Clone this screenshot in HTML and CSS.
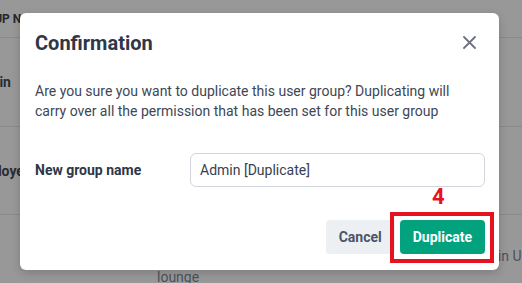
FILE: index.html
```html
<!DOCTYPE html>
<html>
<head>
<meta charset="utf-8">
<link rel="stylesheet" href="styles.css">
</head>
<body>
<div class="page">
  <div class="table">
    <div class="row head">
      <span class="c1">Group Name</span>
      <span class="c2">Description</span>
    </div>
    <div class="row r1"><span class="c1 strong">Admin</span></div>
    <div class="row r2"><span class="c1 strong">Employee</span></div>
    <div class="row r3">
      <span class="c1"></span>
      <span class="c2">Access to the staff<br>lounge</span>
      <span class="c3">Main Users</span>
    </div>
  </div>

  <div class="modal">
    <div class="modal-head">
      <h2 class="title">Confirmation</h2>
      <svg class="close" width="13" height="13" viewBox="0 0 13 13" aria-hidden="true">
        <path d="M1 1 L12 12 M12 1 L1 12" stroke="#6b7280" stroke-width="1.8" stroke-linecap="round" fill="none"/>
      </svg>
    </div>
    <p class="message">Are you sure you want to duplicate this user group? Duplicating will carry over all the permission that has been set for this user group</p>
    <div class="field">
      <label class="label">New group name</label>
      <div class="input">Admin [Duplicate]</div>
    </div>
    <div class="actions">
      <button class="btn cancel">Cancel</button>
      <button class="btn primary">Duplicate</button>
    </div>
    <div class="mark-num">4</div>
    <div class="mark-box"></div>
  </div>
</div>
</body>
</html>
```

FILE: styles.css
```css
* { box-sizing: border-box; }
html, body { margin: 0; padding: 0; }
body {
  font-family: Roboto, "Liberation Sans", sans-serif;
  background: #989898;
  width: 522px;
  height: 283px;
  overflow: hidden;
}
.page {
  position: relative;
  width: 522px;
  height: 283px;
  overflow: hidden;
}
.table {
  margin-left: -30px;
  width: 600px;
}
.row {
  display: flex;
  align-items: center;
  border-bottom: 1px solid #8a8a8a;
  color: #2a2c30;
  font-size: 14px;
}
.head {
  height: 38px;
  font-size: 12px;
  font-weight: 700;
  text-transform: uppercase;
  color: #25272b;
}
.r1 { height: 89px; }
.r2 { height: 88px; }
.r3 {
  align-items: flex-start;
  border-bottom: none;
  padding-top: 31px;
  line-height: 21px;
  color: #4d5158;
}
.c1 { width: 187px; flex: none; }
.c2 { width: 321px; flex: none; }
.c3 { flex: none; white-space: nowrap; }
.strong { font-weight: 700; color: #2a2c30; }

.modal {
  position: absolute;
  left: 20px;
  top: 13px;
  width: 479px;
  height: 257px;
  background: #ffffff;
  border-radius: 6px;
  box-shadow: 0 3px 10px rgba(0, 0, 0, 0.18);
  padding: 16px 14px 16px 15px;
}
.modal-head {
  display: flex;
  justify-content: space-between;
  align-items: center;
  height: 28px;
}
.title {
  margin: 0;
  font-size: 20px;
  line-height: 28px;
  font-weight: 700;
  color: #2d3748;
}
.close { margin-right: 9px; margin-top: -2px; }
.message {
  margin: 24px 0 0;
  max-width: 436px;
  font-size: 14px;
  line-height: 20px;
  color: #3d4756;
}
.field {
  display: flex;
  align-items: center;
  margin-top: 32px;
}
.label {
  width: 155px;
  flex: none;
  font-size: 14px;
  font-weight: 700;
  color: #2d3748;
}
.input {
  width: 295px;
  height: 34px;
  border: 1px solid #d3d6dc;
  border-radius: 6px;
  padding: 0 9px;
  display: flex;
  align-items: center;
  font-size: 14px;
  color: #374151;
}
.actions {
  display: flex;
  justify-content: flex-end;
  gap: 5px;
  margin-top: 33px;
}
.btn {
  height: 34px;
  border: none;
  border-radius: 4px;
  padding: 0 13px;
  font-family: Roboto, "Liberation Sans", sans-serif;
  font-size: 14px;
  font-weight: 700;
}
.cancel { background: #edf0f3; color: #4a5568; }
.primary { background: #03a27f; color: #ffffff; }

.mark-box {
  position: absolute;
  left: 370px;
  top: 199px;
  width: 104px;
  height: 51px;
  border: 4px solid #e5131f;
}
.mark-num {
  position: absolute;
  left: 412px;
  top: 172px;
  font-size: 22px;
  line-height: 24px;
  font-weight: 700;
  color: #e5131f;
}
```
